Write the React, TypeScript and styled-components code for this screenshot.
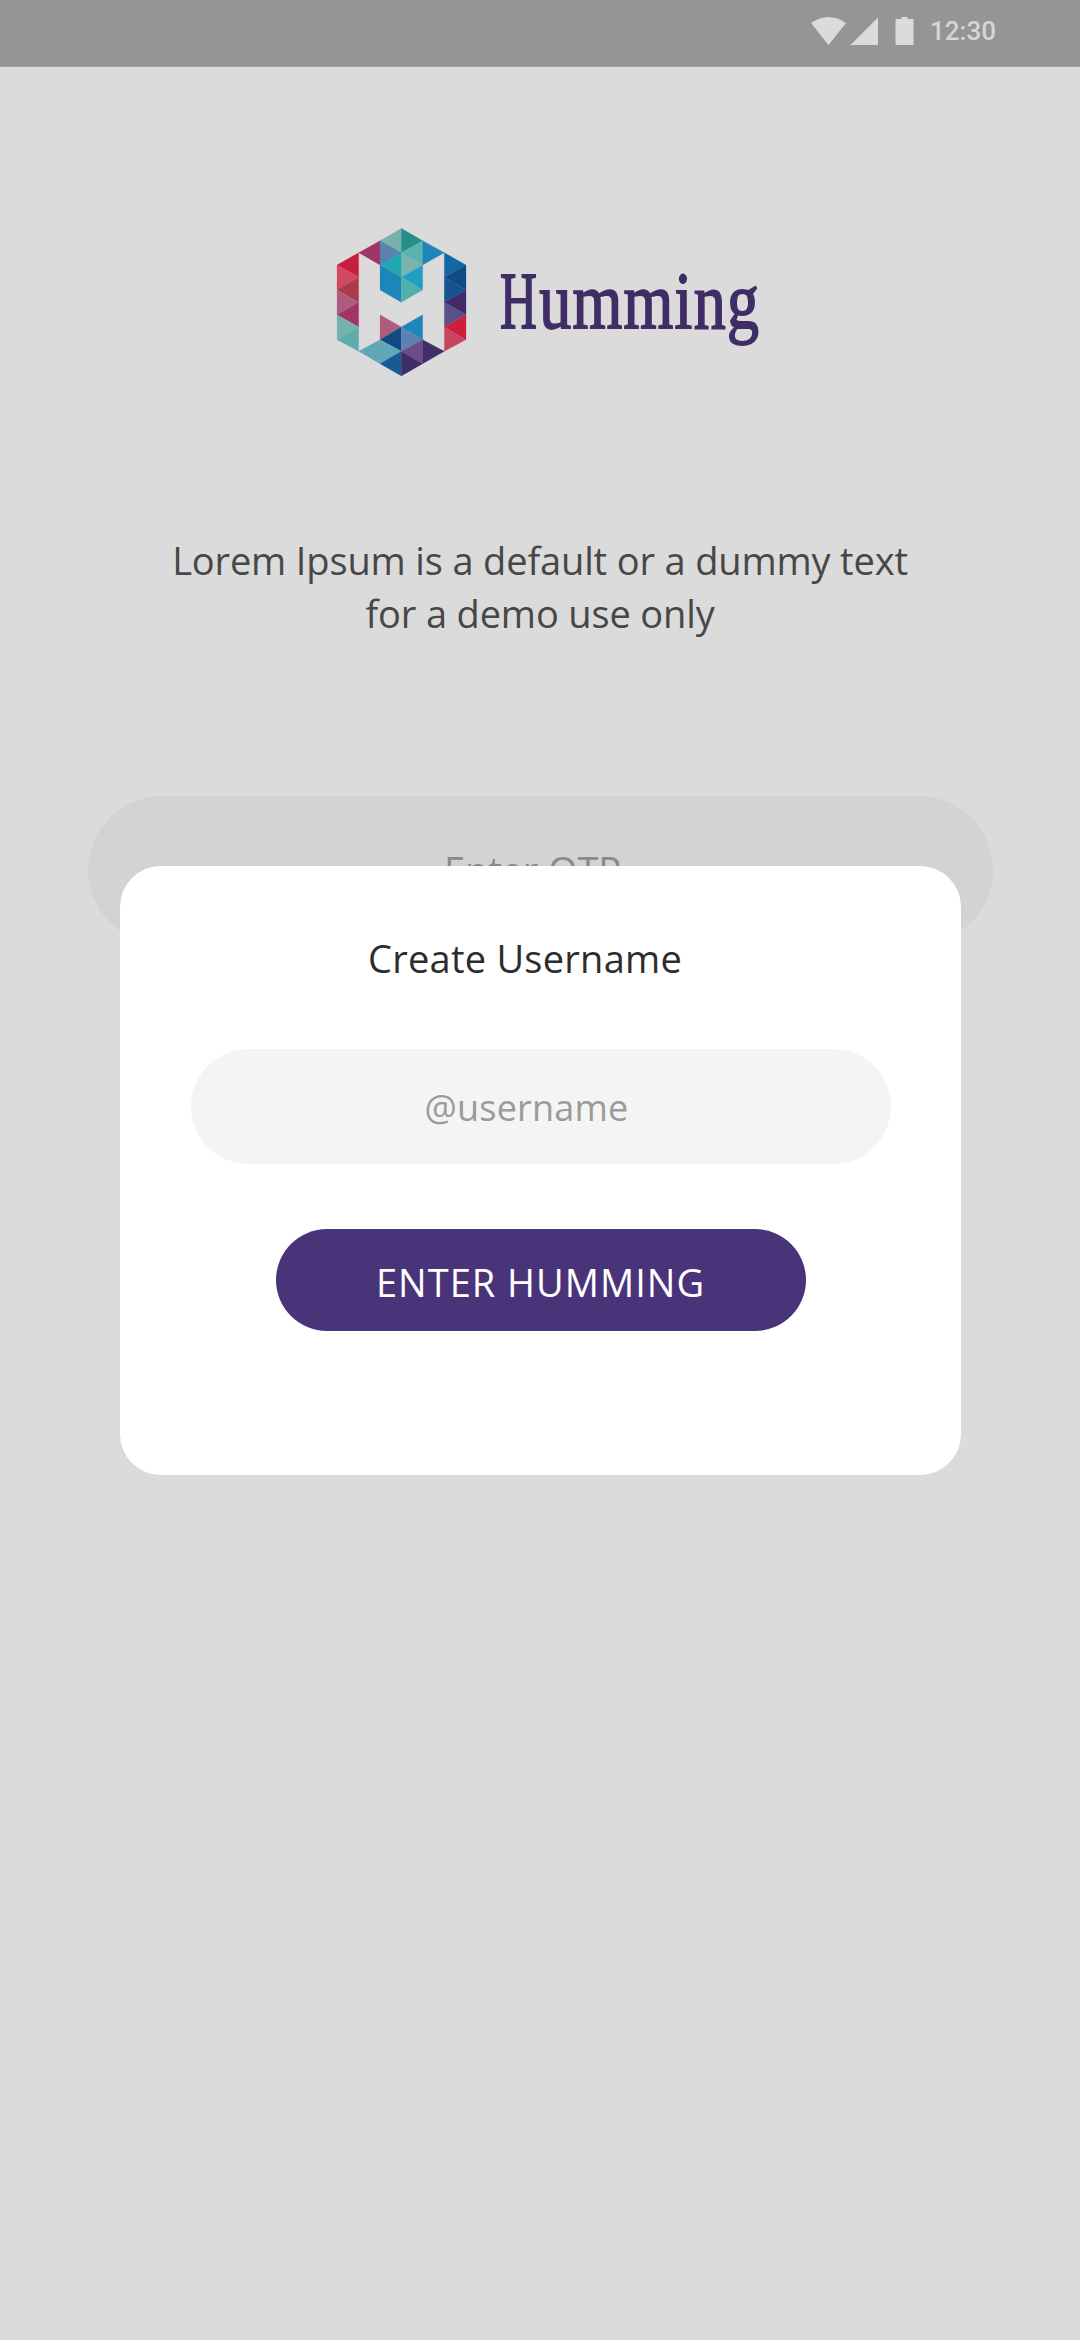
import React from "react";
import styled, { createGlobalStyle } from "styled-components";

const GlobalStyle = createGlobalStyle`
  * { box-sizing: border-box; }
  body { margin: 0; background: #dbdbdb; }
`;

const Screen = styled.div`
  position: relative;
  display: flex;
  flex-direction: column;
  align-items: center;
  width: 1080px;
  height: 2340px;
  overflow: hidden;
  background: #dbdbdb;
  font-family: "Open Sans", "Noto Sans", sans-serif;
  font-size: 38px;
`;

const StatusBar = styled.header`
  display: flex;
  align-items: flex-start;
  justify-content: flex-end;
  width: 100%;
  height: 67px;
  padding: 17px 84px 0 0;
  background: #959595;
  border-bottom: 1px solid #a3a3a3;
`;

const StatusIcons = styled.svg`
  display: block;
  width: 103px;
  height: 28px;
  margin-right: 16px;
  fill: #dbdbdb;
`;

const Clock = styled.time`
  font: 500 26px/28px Roboto, sans-serif;
  color: #d6d6d6;
`;

const Brand = styled.div`
  display: flex;
  align-items: flex-start;
  width: 440px;
  height: 170px;
  margin-top: 148px;
`;

const Emblem = styled.svg`
  flex: none;
  width: 160px;
  height: 170px;
`;

const Wordmark = styled.div`
  margin: 41px 0 0 20px;
  font: 400 80px/90px "Liberation Serif", serif;
  letter-spacing: 1.6px;
  color: #3f2e66;
  -webkit-text-stroke: 1.8px #3f2e66;
  white-space: nowrap;
  transform: scaleX(0.8);
  transform-origin: 0 0;
`;

const Initial = styled.span`
  display: inline-block;
  width: 49px;
  transform: scaleX(0.8);
  transform-origin: 0 0;
`;

const Intro = styled.p`
  margin: 149px 0 0;
  line-height: 53px;
  letter-spacing: -0.15px;
  text-align: center;
  color: #474747;
`;

const OtpField = styled.div`
  display: flex;
  justify-content: center;
  width: 905px;
  height: 148px;
  margin-top: 156px;
  padding: 47px 15px 0 0;
  border-radius: 74px;
  background: #d3d3d3;
  line-height: 54px;
  letter-spacing: -0.1px;
  color: #8a8a8a;
`;

const Dialog = styled.section`
  position: absolute;
  top: 866px;
  left: 120px;
  display: flex;
  flex-direction: column;
  align-items: center;
  width: 841px;
  height: 609px;
  border-radius: 41px;
  background: #fff;
`;

const Title = styled.h1`
  margin: 65px 31px 0 0;
  font-size: 38px;
  font-weight: 400;
  line-height: 54px;
  letter-spacing: 0.25px;
  color: #2d2d2d;
`;

const NameField = styled.div`
  display: flex;
  justify-content: center;
  width: 700px;
  height: 115px;
  margin-top: 64px;
  padding: 32px 28px 0 0;
  border-radius: 58px;
  background: #f4f4f4;
  font-size: 36px;
  line-height: 54px;
  letter-spacing: 0.2px;
  color: #9b9b9b;
`;

const EnterButton = styled.button`
  width: 530px;
  height: 102px;
  margin-top: 65px;
  padding: 4px 0 0;
  border: 0;
  border-radius: 51px;
  background: #4a3479;
  font-family: inherit;
  font-size: 38px;
  letter-spacing: 1px;
  color: #fff;
`;

const facets: [string, string][] = [
  ["#c91f3e", "51,150 116,113 116,187"],
  ["#d34860", "51,150 116,187 51,225"],
  ["#a93b4d", "116,187 116,262 51,225"],
  ["#ae5c7e", "51,225 116,262 51,299"],
  ["#a03566", "116,262 116,336 51,299"],
  ["#75b2ab", "51,299 116,336 51,374"],
  ["#5eacab", "116,336 116,409 51,374"],
  ["#9f3565", "116,113 180,77 180,150"],
  ["#5b82b0", "180,77 244,113 180,150"],
  ["#76b2ab", "180,77 244,40 244,113"],
  ["#258f8b", "244,40 308,77 244,113"],
  ["#5bb1ae", "308,77 308,150 244,113"],
  ["#78b4ac", "244,113 308,150 244,187"],
  ["#5b82b0", "244,113 180,150 180,77"],
  ["#20a9ae", "244,113 244,187 180,150"],
  ["#1d85b7", "308,77 373,113 308,150"],
  ["#1d85b7", "180,150 244,187 244,262 180,225"],
  ["#1f9fc4", "308,150 308,225 244,187"],
  ["#53afab", "244,187 308,225 244,262"],
  ["#1068a6", "373,113 438,150 373,187"],
  ["#0f4a84", "438,150 438,225 373,187"],
  ["#15538e", "373,187 438,225 373,262"],
  ["#412a6b", "438,225 438,299 373,262"],
  ["#5a5089", "373,262 438,299 373,336"],
  ["#cb1f3c", "438,299 438,374 373,336"],
  ["#c7465d", "373,336 438,374 373,409"],
  ["#ae5c7e", "180,299 244,336 180,374"],
  ["#1d85b7", "308,299 308,374 244,336"],
  ["#0f4a84", "244,336 244,409 180,374"],
  ["#5b82b0", "244,336 308,374 244,409"],
  ["#60a8b8", "116,409 180,374 244,409 180,446"],
  ["#185a93", "244,409 244,483 180,446"],
  ["#6a4d86", "244,409 308,374 308,446"],
  ["#412d67", "308,374 373,409 308,446"],
  ["#3d2f65", "244,409 308,446 244,483"],
];

export default function App() {
  return (
    <Screen>
      <GlobalStyle />
      <StatusBar>
        <StatusIcons viewBox="0 0 103 28">
          <path d="M0 6Q17.500 -6 35 6L17.500 28Z" />
          <path d="M39.500 28L67 .5V28Z" />
          <path d="M84.500 2H90.500V0H96.500V2H102.500V28H84.500Z" />
        </StatusIcons>
        <Clock>12:30</Clock>
      </StatusBar>
      <Brand>
        <Emblem viewBox="0 0 480 510">
          {facets.map(([fill, points]) => (
            <polygon key={points} fill={fill} stroke={fill} strokeWidth="0.6" points={points} />
          ))}
        </Emblem>
        <Wordmark>
          <Initial>H</Initial>umming
        </Wordmark>
      </Brand>
      <Intro>
        Lorem Ipsum is a default or a dummy text
        <br />
        for a demo use only
      </Intro>
      <OtpField>Enter OTP</OtpField>
      <Dialog>
        <Title>Create Username</Title>
        <NameField>@username</NameField>
        <EnterButton>ENTER HUMMING</EnterButton>
      </Dialog>
    </Screen>
  );
}
